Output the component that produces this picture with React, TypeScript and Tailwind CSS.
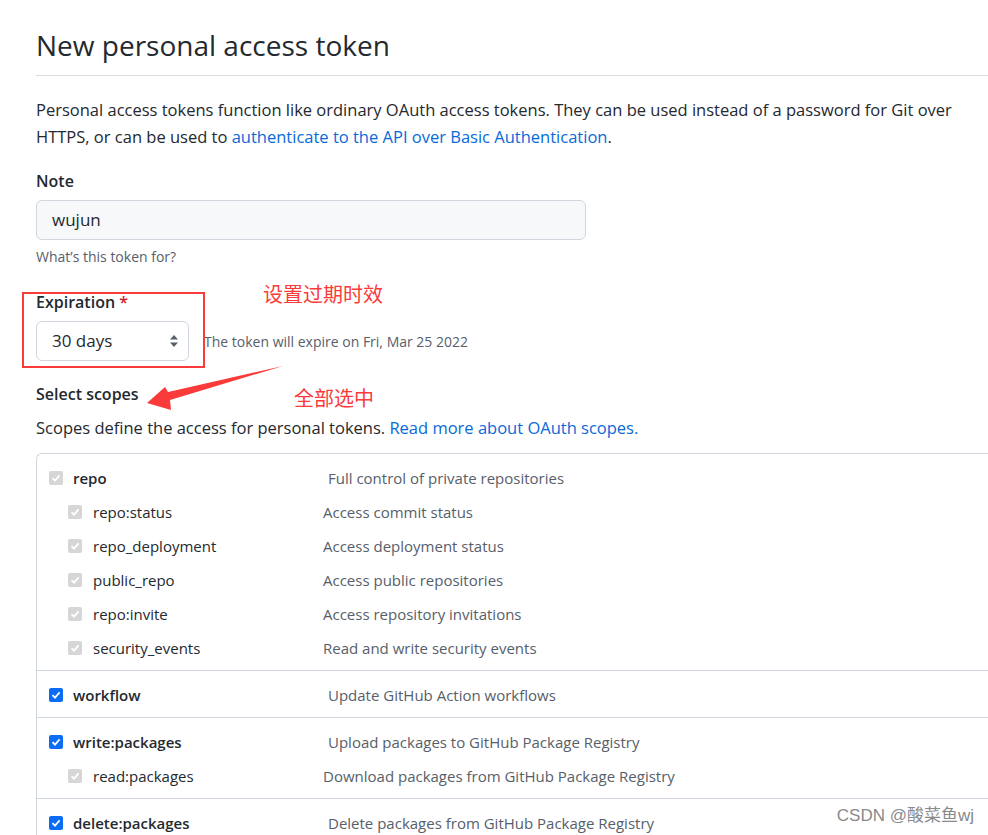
import React from "react"

type Scope = { name: string; desc: string; on: boolean; subs?: { name: string; desc: string }[] }

const scopes: Scope[] = [
  {
    name: "repo",
    desc: "Full control of private repositories",
    on: false,
    subs: [
      { name: "repo:status", desc: "Access commit status" },
      { name: "repo_deployment", desc: "Access deployment status" },
      { name: "public_repo", desc: "Access public repositories" },
      { name: "repo:invite", desc: "Access repository invitations" },
      { name: "security_events", desc: "Read and write security events" },
    ],
  },
  { name: "workflow", desc: "Update GitHub Action workflows", on: true },
  {
    name: "write:packages",
    desc: "Upload packages to GitHub Package Registry",
    on: true,
    subs: [{ name: "read:packages", desc: "Download packages from GitHub Package Registry" }],
  },
  { name: "delete:packages", desc: "Delete packages from GitHub Package Registry", on: true },
]

function Box({ on }: { on: boolean }) {
  return (
    <span
      className={
        on
          ? "w-[14px] h-[14px] rounded-[2px] bg-[#0b6cf5] flex items-center justify-center shrink-0"
          : "w-[14px] h-[14px] rounded-[2px] bg-[#d6d6d6] flex items-center justify-center shrink-0"
      }
    >
      <svg width="10" height="10" viewBox="0 0 10 10">
        <path d="M1.5 5.2 L4 7.6 L8.6 2.4" fill="none" stroke="white" strokeWidth="1.8" />
      </svg>
    </span>
  )
}

function App() {
  return (
    <div
      className="relative w-[988px] h-[835px] overflow-hidden bg-white text-[#24292f]"
      style={{ fontFamily: '"Open Sans", "Noto Sans", "Noto Sans CJK SC", sans-serif' }}
    >
      <div className="pl-[36px] w-[1100px]">
        <h1 className="text-[28px] leading-[34px] pt-[28px] pb-[13px] border-b border-[#d8dee4]">
          New personal access token
        </h1>
        <p className="mt-[20px] text-[16.5px] leading-[27px] whitespace-nowrap">
          Personal access tokens function like ordinary OAuth access tokens. They can be used instead of a password for Git over
          <br />
          HTTPS, or can be used to <span className="text-[#0969da]">authenticate to the API over Basic Authentication</span>.
        </p>

        <div className="mt-[20px] font-semibold text-[16px] leading-[22px]">Note</div>
        <div className="mt-[8px] w-[550px] h-[40px] rounded-[6px] border border-[#d0d7de] bg-[#f6f8fa] flex items-center pl-[15px] text-[17px]">
          wujun
        </div>
        <div className="mt-[7px] text-[14px] leading-[20px] text-[#57606a]">What’s this token for?</div>

        <div className="mt-[24px] font-semibold text-[16px] leading-[22px]">
          Expiration <span className="text-[#cf222e]">*</span>
        </div>
        <div className="mt-[8px] flex items-center">
          <div className="w-[153px] h-[40px] rounded-[6px] border border-[#d0d7de] bg-white flex items-center justify-between pl-[15px] pr-[9px] text-[17px]">
            <span>30 days</span>
            <svg width="10" height="14" viewBox="0 0 10 14">
              <path d="M5 1 L9 5.5 H1 Z M5 13 L9 8.5 H1 Z" fill="#57606a" />
            </svg>
          </div>
          <span className="ml-[15px] text-[14px] text-[#57606a]">The token will expire on Fri, Mar 25 2022</span>
        </div>

        <div className="mt-[22px] font-semibold text-[16px] leading-[22px]">Select scopes</div>
        <p className="mt-[11px] text-[16.5px] leading-[24px]">
          Scopes define the access for personal tokens. <span className="text-[#0969da]">Read more about OAuth scopes.</span>
        </p>

        <div className="mt-[13px] border-l border-t border-[#d0d7de] rounded-tl-[6px]">
          {scopes.map((s) => (
            <div key={s.name} className="border-b border-[#d0d7de] pt-[7px] pb-[5px]">
              <div className="h-[34px] flex items-center pl-[12px]">
                <Box on={s.on} />
                <span className="ml-[10px] w-[255px] font-semibold text-[15px]">{s.name}</span>
                <span className="text-[15px] text-[#57606a]">{s.desc}</span>
              </div>
              {s.subs?.map((c) => (
                <div key={c.name} className="h-[34px] flex items-center pl-[31px]">
                  <Box on={false} />
                  <span className="ml-[11px] w-[230px] text-[15px]">{c.name}</span>
                  <span className="text-[15px] text-[#57606a]">{c.desc}</span>
                </div>
              ))}
            </div>
          ))}
        </div>
      </div>

      {/* annotations */}
      <div className="absolute left-[22px] top-[292px] w-[183px] h-[76px] border-2 border-[#fb3a3a]" />
      <div className="absolute left-[263px] top-[280px] text-[20px] leading-[30px] text-[#fb3a3a]">设置过期时效</div>
      <div className="absolute left-[294px] top-[384px] text-[20px] leading-[30px] text-[#fb3a3a]">全部选中</div>
      <svg className="absolute left-0 top-0" width="988" height="835" viewBox="0 0 988 835">
        <polygon points="283,366 168,392 165,387 147,403 171,410 170,400" fill="#fb3a3a" />
      </svg>

      <div className="absolute right-[14px] bottom-[7px] text-[17px] text-[#8a8a8a]" style={{ fontFamily: '"Liberation Sans", "Noto Sans CJK SC", sans-serif' }}>
        CSDN @酸菜鱼wj
      </div>
    </div>
  )
}

export default App
